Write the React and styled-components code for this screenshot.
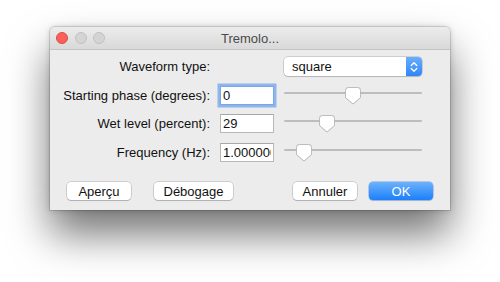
import React from 'react';
import styled, { createGlobalStyle, css } from 'styled-components';

const Global = createGlobalStyle`
  html, body { margin: 0; padding: 0; background: #fff; }
  body { font-family: "Liberation Sans", Arial, sans-serif; font-size: 13px; color: #111; }
`;

const Page = styled.div`
  width: 500px;
  height: 282px;
  padding: 27px 0 0 50px;
  box-sizing: border-box;
  overflow: hidden;
`;

const Window = styled.div`
  width: 400px;
  height: 183px;
  background: #ececec;
  border-radius: 5px 5px 0 0;
  box-shadow: 0 0 0 1px rgba(0, 0, 0, 0.12), 0 0 6px rgba(0, 0, 0, 0.18), 0 24px 42px rgba(0, 0, 0, 0.55);
  display: flex;
  flex-direction: column;
`;

const TitleBar = styled.div`
  position: relative;
  height: 23px;
  box-sizing: border-box;
  border-bottom: 1px solid #c4c4c4;
  border-radius: 5px 5px 0 0;
  background: linear-gradient(#ececec, #d9d9d9);
  display: flex;
  align-items: center;
  padding-left: 6px;
  gap: 6.5px;
`;

const Light = styled.span`
  width: 12px;
  height: 12px;
  box-sizing: border-box;
  border-radius: 50%;
  background: ${p => (p.$red ? '#fc605b' : '#d4d4d4')};
  border: 0.5px solid ${p => (p.$red ? '#de4b46' : '#c0c0c0')};
`;

const Title = styled.div`
  position: absolute;
  left: 0;
  right: 0;
  top: 0;
  bottom: 0;
  display: flex;
  align-items: center;
  justify-content: center;
  color: #4a4a4a;
  font-size: 13px;
  pointer-events: none;
`;

const Form = styled.div`
  display: grid;
  grid-template-columns: 160px 54px 138px;
  grid-template-rows: repeat(4, 19px);
  column-gap: 10px;
  row-gap: 9.5px;
  margin-top: 7px;
  align-items: center;
`;

const Label = styled.div`
  grid-column: 1;
  justify-self: end;
  white-space: nowrap;
  color: #111;
`;

const TextInput = styled.input`
  grid-column: 2;
  width: 54px;
  height: 19px;
  box-sizing: border-box;
  border: 1px solid #b8b8b8;
  border-top-color: #a8a8a8;
  background: #fff;
  font-family: inherit;
  font-size: 13px;
  color: #111;
  padding: 0 2px;
  margin: 0;
  outline: none;
  ${p => p.$focused && css`
    box-shadow: 0 0 0 2.5px rgba(112, 163, 238, 0.75);
    border-color: #7aa6e4;
  `}
`;

const SelectBox = styled.div`
  grid-column: 3;
  height: 19px;
  box-sizing: border-box;
  background: #fff;
  border-radius: 4px;
  box-shadow: 0 0 0 0.5px rgba(0, 0, 0, 0.25), 0 1px 1px rgba(0, 0, 0, 0.12);
  display: flex;
  align-items: center;
  overflow: hidden;
`;

const SelectText = styled.span`
  flex: 1;
  padding-left: 8px;
  color: #111;
`;

const SelectArrows = styled.span`
  width: 16px;
  height: 100%;
  background: linear-gradient(#6aaefc, #2f86fa);
  display: flex;
  align-items: center;
  justify-content: center;
`;

const SliderWrap = styled.div`
  grid-column: 3;
  position: relative;
  height: 19px;
`;

const Track = styled.div`
  position: absolute;
  left: 0;
  right: 0;
  top: 6px;
  height: 2px;
  border-radius: 1px;
  background: #bdbdbd;
`;

const Thumb = styled.svg`
  position: absolute;
  top: 1px;
  width: 16px;
  height: 18px;
  margin-left: -8px;
  filter: drop-shadow(0 0.5px 0.5px rgba(0, 0, 0, 0.2));
`;

const ButtonRow = styled.div`
  display: flex;
  align-items: center;
  margin-top: 20.5px;
  padding: 0 17px;
`;

const Group = styled.div`
  display: flex;
  gap: ${p => p.$gap}px;
  margin-right: ${p => (p.$push ? 'auto' : '0')};
`;

const Button = styled.button`
  width: ${p => p.$w}px;
  height: 18px;
  box-sizing: border-box;
  border: none;
  border-radius: 4px;
  font-family: inherit;
  font-size: 13px;
  padding: 0;
  margin: 0;
  color: #111;
  background: #fff;
  box-shadow: 0 0 0 0.5px rgba(0, 0, 0, 0.25), 0 1px 1px rgba(0, 0, 0, 0.15);
  ${p => p.$primary && css`
    color: #fff;
    background: linear-gradient(#6cb2fc, #1c7ffa);
    box-shadow: 0 0 0 0.5px rgba(20, 90, 220, 0.5), 0 1px 1px rgba(0, 0, 0, 0.12);
  `}
`;

function Slider({ value }) {
  const left = `calc(8px + (100% - 16px) * ${value})`;
  return (
    <SliderWrap>
      <Track />
      <Thumb viewBox="0 0 16 18" style={{ left }}>
        <path
          d="M3.5 0.5 H12.5 Q15.5 0.5 15.5 3.5 V10.5 L8 17 L0.5 10.5 V3.5 Q0.5 0.5 3.5 0.5 Z"
          fill="#fff"
          stroke="#b3b3b3"
          strokeWidth="0.8"
        />
      </Thumb>
    </SliderWrap>
  );
}

export default function App() {
  return (
    <>
      <Global />
      <Page>
        <Window>
          <TitleBar>
            <Light $red />
            <Light />
            <Light />
            <Title>Tremolo...</Title>
          </TitleBar>
          <Form>
            <Label>Waveform type:</Label>
            <SelectBox>
              <SelectText>square</SelectText>
              <SelectArrows>
                <svg width="8" height="12" viewBox="0 0 8 12">
                  <path d="M1.2 4.5 L4 1.7 L6.8 4.5 M1.2 7.5 L4 10.3 L6.8 7.5" fill="none" stroke="#fff" strokeWidth="1.3" strokeLinecap="round" strokeLinejoin="round" />
                </svg>
              </SelectArrows>
            </SelectBox>

            <Label>Starting phase (degrees):</Label>
            <TextInput $focused readOnly value="0" />
            <Slider value={0.5} />

            <Label>Wet level (percent):</Label>
            <TextInput readOnly value="29" />
            <Slider value={0.29} />

            <Label>Frequency (Hz):</Label>
            <TextInput readOnly value="1.000000" />
            <Slider value={0.1} />
          </Form>
          <ButtonRow>
            <Group $gap={23} $push>
              <Button $w={64}>Aperçu</Button>
              <Button $w={79}>Débogage</Button>
            </Group>
            <Group $gap={12}>
              <Button $w={64}>Annuler</Button>
              <Button $w={64} $primary>OK</Button>
            </Group>
          </ButtonRow>
        </Window>
      </Page>
    </>
  );
}
